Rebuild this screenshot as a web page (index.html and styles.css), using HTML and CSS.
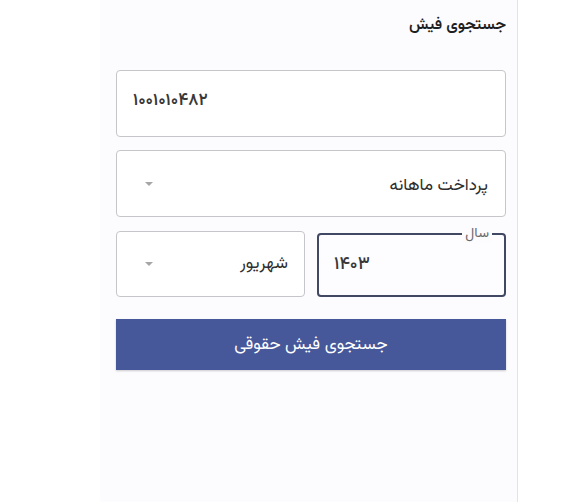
FILE: index.html
```html
<!DOCTYPE html>
<html lang="fa" dir="rtl">
<head>
<meta charset="utf-8">
<title>جستجوی فیش</title>
<link rel="stylesheet" href="styles.css">
</head>
<body>
<div class="page">
  <main class="panel">
    <h1 class="title">جستجوی فیش</h1>
    <div class="field ltr"><span class="value">۱۰۰۱۰۱۰۴۸۲</span></div>
    <div class="field select">
      <span class="value">پرداخت ماهانه</span>
      <span class="caret"></span>
    </div>
    <div class="row">
      <div class="field focused ltr">
        <span class="legend">سال</span>
        <span class="value">۱۴۰۳</span>
      </div>
      <div class="field select">
        <span class="value">شهریور</span>
        <span class="caret"></span>
      </div>
    </div>
    <button class="submit" type="button">جستجوی فیش حقوقی</button>
  </main>
</div>
</body>
</html>
```

FILE: styles.css
```css
html, body {
  margin: 0;
  padding: 0;
  background: #ffffff;
}
body {
  font-family: "Vazirmatn", "Noto Sans Arabic", "Noto Naskh Arabic", "DejaVu Sans", sans-serif;
  color: #2b2b2b;
  width: 575px;
  height: 502px;
  overflow: hidden;
}
.page {
  direction: ltr;
  display: flex;
  height: 502px;
}
.panel {
  direction: rtl;
  margin-left: 100px;
  width: 418px;
  height: 502px;
  box-sizing: border-box;
  background: #fcfbfe;
  border-right: 1px solid #e3e3e6;
  padding: 12px 11px 0 16px;
  display: flex;
  flex-direction: column;
}
.title {
  margin: 0;
  font-size: 16px;
  font-weight: 600;
  line-height: 28px;
  color: #1f1f1f;
}
.field {
  position: relative;
  box-sizing: border-box;
  height: 67px;
  border: 1px solid #c6c6ca;
  border-radius: 4px;
  background: #ffffff;
  display: flex;
  align-items: center;
  justify-content: space-between;
  padding: 0 17px 0 28px;
}
.field:first-of-type { margin-top: 30px; }
.panel > .field + .field { margin-top: 13px; }
.field.ltr {
  direction: ltr;
  justify-content: flex-start;
  padding: 0 16px;
}
.field.ltr .value {
  margin-top: -5px;
  font-size: 17px;
  font-weight: 600;
  color: #383838;
}
.value { color: #2e2e2e; }
.select .value { font-size: 17px; margin-top: 4px; }
.caret {
  width: 0;
  height: 0;
  border-left: 4px solid transparent;
  border-right: 4px solid transparent;
  border-top: 4px solid #a6a6a8;
}
.row {
  margin-top: 14px;
  display: grid;
  grid-template-columns: 1fr 1fr;
  gap: 12px;
}
.row .field { height: 66px; padding-right: 16px; }
.row .select .value { font-size: 17px; margin-top: 0; }
.field.focused {
  border: 2px solid #404863;
  padding: 0 15px;
  margin-top: 2px;
  height: 64px;
  background: #fdfdff;
}
.field.focused .value {
  font-size: 18px;
  font-weight: 500;
  margin-top: 0;
}
.legend {
  position: absolute;
  top: -10px;
  right: 12px;
  padding: 0 3px;
  background: #fcfbfe;
  color: #6a6a6a;
  font-size: 14px;
  line-height: 18px;
  direction: rtl;
}
.submit {
  margin-top: 22px;
  height: 51px;
  border: none;
  border-radius: 0;
  background: #46579a;
  color: #ffffff;
  font-family: inherit;
  font-size: 17px;
  box-shadow: 0 1px 2px rgba(0,0,0,0.2);
}
```
